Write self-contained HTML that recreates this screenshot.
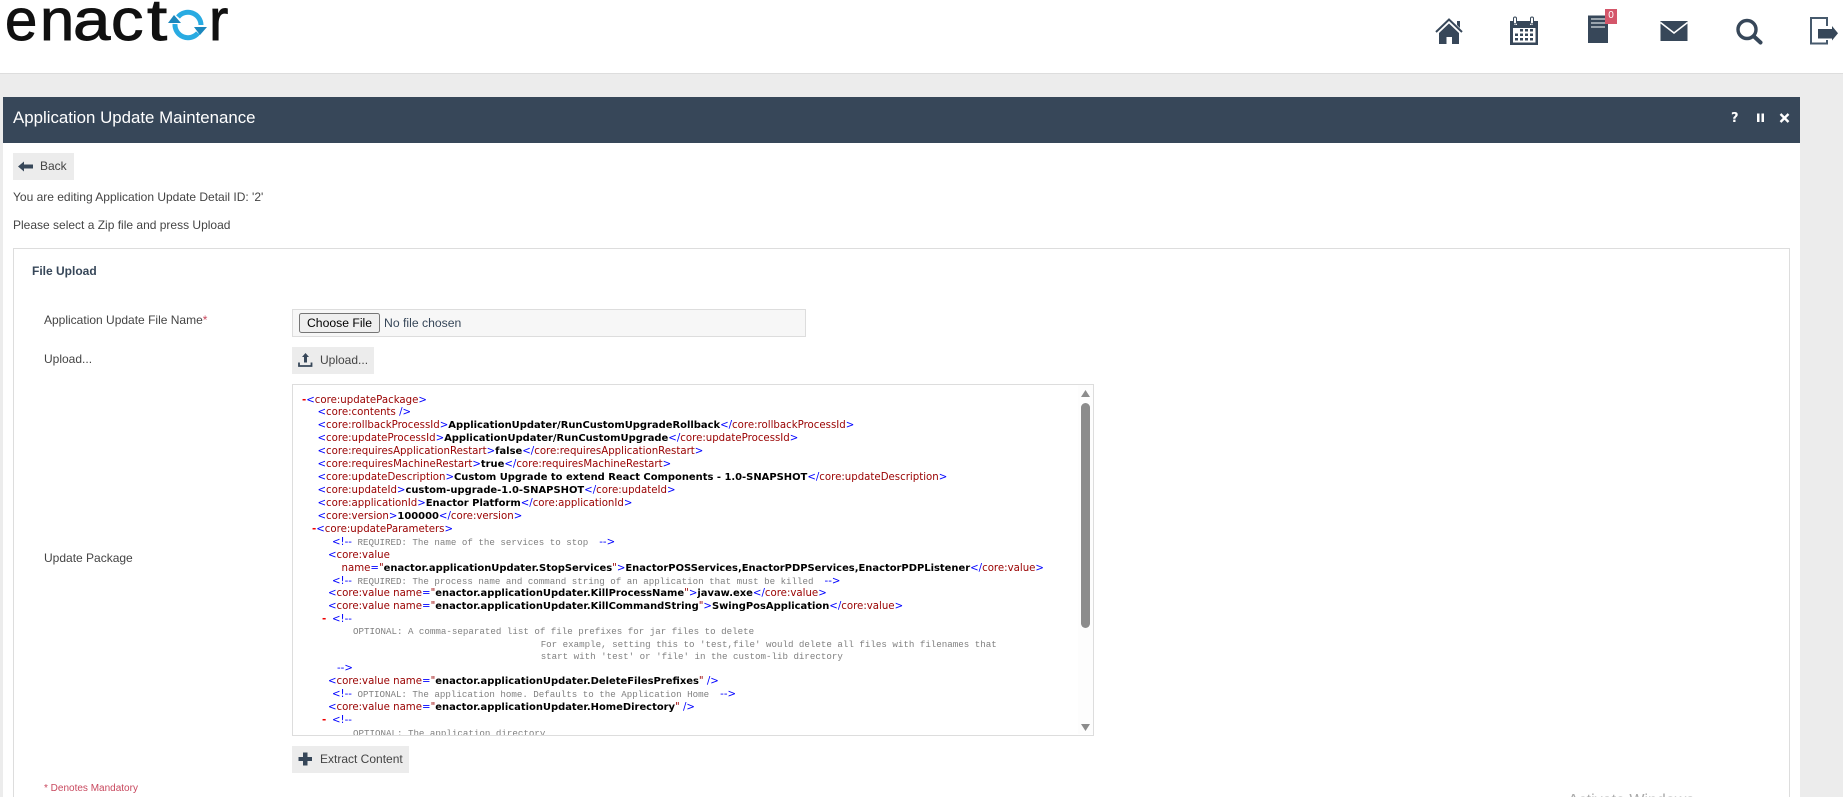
<!DOCTYPE html>
<html lang="en"><head><meta charset="utf-8"><title>Application Update Maintenance</title>
<style>
html,body{margin:0;padding:0;width:1843px;height:797px;overflow:hidden;background:#ececec;font-family:"Liberation Sans",Arial,sans-serif;}
body{position:relative}
.a{position:absolute}
.t{position:absolute;white-space:nowrap;font-size:12px;color:#444;line-height:14px}
.btn{position:absolute;background:#ececec;height:27px}
.x{position:absolute;white-space:pre;font-family:"DejaVu Sans",sans-serif;font-size:10.2px;line-height:13px;height:13px;color:#900}
.x i{font-style:normal;color:#00f}
.x b{color:#000;font-weight:bold;font-size:9.95px}
.x u{text-decoration:none;color:#e00;font-weight:bold}
.x s{text-decoration:none;font-family:"Liberation Mono",monospace;font-size:9.17px;color:#808080}
</style></head><body>
<div class="a" style="left:0;top:0;width:1843px;height:73px;background:#fff;border-bottom:1px solid #ddd"></div>

<svg class="a" style="left:0;top:0" width="240" height="60" viewBox="0 0 240 60">
<g font-family="Liberation Sans" font-size="58" fill="#111" stroke="#111" stroke-width=".9">
<text x="5" y="40">e</text>
<text transform="translate(40 40) scale(1.06 1)">n</text>
<text transform="translate(73 40) scale(1.16 1)">a</text>
<text transform="translate(111 40) scale(1.12 1)">c</text>
<text transform="translate(147 40) scale(1.25 1)">t</text>
<text x="209" y="40">r</text>
</g>
<path d="M178 17 A13 13 0 0 1 201 25" fill="none" stroke="#29abe2" stroke-width="5"/>
<path d="M175 24 A13 13 0 0 0 198 33" fill="none" stroke="#29abe2" stroke-width="5"/>
<path d="M168 23 L174 15 L181 23 Z" fill="#1b87bd"/>
<path d="M194 27 L207 27 L200 35 Z" fill="#1b87bd"/>
</svg>

<svg class="a" style="left:1430px;top:10px" width="410" height="42" viewBox="1430 10 410 42" fill="#374759">
<path d="M1436 32 L1449 19.5 L1462 32" fill="none" stroke="#374759" stroke-width="2"/>
<path d="M1457 21 h3 v7 l-3 -3z"/>
<path d="M1439 33 L1449 23.5 L1459 33 V44 H1452 V37 H1446.500 V44 H1439 Z"/>
<path fill-rule="evenodd" d="M1510 21 H1514 V25 H1517 V21 H1530 V25 H1533 V21 H1538 V45 H1510 Z M1513 28 V42.5 H1535.5 V28 Z"/>
<rect x="1513.5" y="17" width="3" height="7" rx="1.5" fill="none" stroke="#374759"/>
<rect x="1530.5" y="17" width="3" height="7" rx="1.5" fill="none" stroke="#374759"/>
<path d="M1520 29h3v2.5h-3zM1525 29h3v2.5h-3zM1530 29h3v2.5h-3zM1515 33.5h3v2.5h-3zM1520 33.5h3v2.5h-3zM1525 33.5h3v2.5h-3zM1530 33.5h3v2.5h-3zM1515 38h3v2.5h-3zM1520 38h3v2.5h-3zM1525 38h3v2.5h-3zM1530 38h3v2.5h-3z"/>
<rect x="1588" y="15.5" width="20" height="27.5"/>
<path d="M1591 19h14M1591 23h14M1591 27h14" stroke="#d5dbe0" stroke-width="1.2"/>
<rect x="1660.5" y="21" width="27" height="20"/>
<path d="M1660.5 22.5 L1674 33 L1687.5 22.5" fill="none" stroke="#fff" stroke-width="1.6"/>
<circle cx="1747" cy="29.5" r="9" fill="none" stroke="#374759" stroke-width="3.4"/>
<path d="M1754 36.5 L1760.500 42.500" stroke="#374759" stroke-width="4" stroke-linecap="round"/>
<path d="M1827 26 V18 H1811 V43.500 H1827 V40" fill="none" stroke="#475a6d" stroke-width="2"/>
<path d="M1818 29 H1832 V26 L1838 33.300 L1832 40.500 V38.500 H1818 Z"/>
</svg>
<div class="a" style="left:1605px;top:9px;width:12px;height:15px;background:#d4566a;color:#fff;font-size:10px;line-height:14px;text-align:center">0</div>

<div class="a" style="left:3px;top:97px;width:1797px;height:700px;background:#fff"></div>
<div class="a" style="left:3px;top:97px;width:1797px;height:46px;background:#374759"></div>
<div class="t" style="left:13px;top:108px;font-size:16.85px;line-height:20px;color:#fff">Application Update Maintenance</div>
<div class="t" style="left:1731px;top:110px;font-size:13px;line-height:18px;color:#fff;font-weight:bold;font-family:'DejaVu Sans',sans-serif">?</div>
<svg class="a" style="left:1750px;top:110px" width="50" height="16" fill="#fff"><rect x="7" y="3.5" width="2.5" height="8.5"/><rect x="11.5" y="3.5" width="2.5" height="8.5"/><path d="M30.5 4 L38.5 12 M38.5 4 L30.5 12" stroke="#fff" stroke-width="2.4"/></svg>

<div class="btn" style="left:13px;top:153px;width:61px"></div>
<svg class="a" style="left:18px;top:160px" width="16" height="13" fill="#374759"><path d="M0 6.5 L6 1.5 V4.5 H15 V8.5 H6 V11.5 Z"/></svg>
<div class="t" style="left:40px;top:159px">Back</div>
<div class="t" style="left:13px;top:190px">You are editing Application Update Detail ID: '2'</div>
<div class="t" style="left:13px;top:218px">Please select a Zip file and press Upload</div>

<div class="a" style="left:13px;top:248px;width:1775px;height:560px;border:1px solid #ddd"></div>
<div class="t" style="left:32px;top:264px;font-weight:bold;color:#374759">File Upload</div>
<div class="t" style="left:44px;top:313px">Application Update File Name<span style="color:#c8485e">*</span></div>
<div class="t" style="left:44px;top:352px">Upload...</div>
<div class="t" style="left:44px;top:551px">Update Package</div>

<div class="a" style="left:292px;top:309px;width:512px;height:26px;background:#f7f7f7;border:1px solid #ddd"></div>
<input class="a" type="file" style="left:299px;top:313px;width:420px;font-size:12.2px;color:#374759;font-family:'Liberation Sans',Arial,sans-serif">

<div class="btn" style="left:292px;top:347px;width:82px"></div>
<svg class="a" style="left:298px;top:352px" width="15" height="16" fill="#374759"><path d="M7.5 1 L11 5 H9 V10.500 H6 V5 H4 Z"/><path d="M1 10.500 V14 H13.500 V10.500" fill="none" stroke="#374759" stroke-width="1.8"/></svg>
<div class="t" style="left:320px;top:353px">Upload...</div>

<div class="a" style="left:292px;top:384px;width:800px;height:350px;border:1px solid #ddd;background:#fff;overflow:hidden"></div>
<div class="a" style="left:293px;top:385px;width:785px;height:350px;overflow:hidden">
<div class="a" style="left:-293px;top:-385px;width:1100px;height:760px">
<div class="x" style="left:302px;top:394px"><u>-</u><i>&lt;</i>core:updatePackage<i>&gt;</i></div>
<div class="x" style="left:317.5px;top:406px"><i>&lt;</i>core:contents <i>/&gt;</i></div>
<div class="x" style="left:317.5px;top:419px"><i>&lt;</i>core:rollbackProcessId<i>&gt;</i><b>ApplicationUpdater/RunCustomUpgradeRollback</b><i>&lt;/</i>core:rollbackProcessId<i>&gt;</i></div>
<div class="x" style="left:317.5px;top:432px"><i>&lt;</i>core:updateProcessId<i>&gt;</i><b>ApplicationUpdater/RunCustomUpgrade</b><i>&lt;/</i>core:updateProcessId<i>&gt;</i></div>
<div class="x" style="left:317.5px;top:445px"><i>&lt;</i>core:requiresApplicationRestart<i>&gt;</i><b>false</b><i>&lt;/</i>core:requiresApplicationRestart<i>&gt;</i></div>
<div class="x" style="left:317.5px;top:458px"><i>&lt;</i>core:requiresMachineRestart<i>&gt;</i><b>true</b><i>&lt;/</i>core:requiresMachineRestart<i>&gt;</i></div>
<div class="x" style="left:317.5px;top:471px"><i>&lt;</i>core:updateDescription<i>&gt;</i><b>Custom Upgrade to extend React Components - 1.0-SNAPSHOT</b><i>&lt;/</i>core:updateDescription<i>&gt;</i></div>
<div class="x" style="left:317.5px;top:484px"><i>&lt;</i>core:updateId<i>&gt;</i><b>custom-upgrade-1.0-SNAPSHOT</b><i>&lt;/</i>core:updateId<i>&gt;</i></div>
<div class="x" style="left:317.5px;top:497px"><i>&lt;</i>core:applicationId<i>&gt;</i><b>Enactor Platform</b><i>&lt;/</i>core:applicationId<i>&gt;</i></div>
<div class="x" style="left:317.5px;top:510px"><i>&lt;</i>core:version<i>&gt;</i><b>100000</b><i>&lt;/</i>core:version<i>&gt;</i></div>
<div class="x" style="left:312px;top:523px"><u>-</u><i>&lt;</i>core:updateParameters<i>&gt;</i></div>
<div class="x" style="left:332px;top:536px"><i>&lt;!--</i><s> REQUIRED: The name of the services to stop  </s><i>--&gt;</i></div>
<div class="x" style="left:328px;top:549px"><i>&lt;</i>core:value</div>
<div class="x" style="left:341.5px;top:562px">name<i>=</i>"<b>enactor.applicationUpdater.StopServices</b>"<i>&gt;</i><b>EnactorPOSServices,EnactorPDPServices,EnactorPDPListener</b><i>&lt;/</i>core:value<i>&gt;</i></div>
<div class="x" style="left:332px;top:575px"><i>&lt;!--</i><s> REQUIRED: The process name and command string of an application that must be killed  </s><i>--&gt;</i></div>
<div class="x" style="left:328px;top:587px"><i>&lt;</i>core:value name<i>=</i>"<b>enactor.applicationUpdater.KillProcessName</b>"<i>&gt;</i><b>javaw.exe</b><i>&lt;/</i>core:value<i>&gt;</i></div>
<div class="x" style="left:328px;top:600px"><i>&lt;</i>core:value name<i>=</i>"<b>enactor.applicationUpdater.KillCommandString</b>"<i>&gt;</i><b>SwingPosApplication</b><i>&lt;/</i>core:value<i>&gt;</i></div>
<div class="x" style="left:322px;top:613px"><u>-</u></div><div class="x" style="left:332px;top:613px"><i>&lt;!--</i></div>
<div class="x" style="left:353px;top:625px"><s>OPTIONAL: A comma-separated list of file prefixes for jar files to delete</s></div>
<div class="x" style="left:540.7px;top:638px"><s>For example, setting this to 'test,file' would delete all files with filenames that</s></div>
<div class="x" style="left:540.7px;top:650px"><s>start with 'test' or 'file' in the custom-lib directory</s></div>
<div class="x" style="left:337px;top:662px"><i>--&gt;</i></div>
<div class="x" style="left:328px;top:675px"><i>&lt;</i>core:value name<i>=</i>"<b>enactor.applicationUpdater.DeleteFilesPrefixes</b>" <i>/&gt;</i></div>
<div class="x" style="left:332px;top:688px"><i>&lt;!--</i><s> OPTIONAL: The application home. Defaults to the Application Home  </s><i>--&gt;</i></div>
<div class="x" style="left:328px;top:701px"><i>&lt;</i>core:value name<i>=</i>"<b>enactor.applicationUpdater.HomeDirectory</b>" <i>/&gt;</i></div>
<div class="x" style="left:322px;top:714px"><u>-</u></div><div class="x" style="left:332px;top:714px"><i>&lt;!--</i></div>
<div class="x" style="left:353px;top:727px"><s>OPTIONAL: The application directory</s></div>
</div></div>

<div class="a" style="left:1078px;top:385px;width:15px;height:349px;background:#fdfdfd"></div>
<div class="a" style="left:1081px;top:403px;width:9px;height:225px;background:#8c8c8c;border-radius:4.5px"></div>
<svg class="a" style="left:1078px;top:385px" width="15" height="350" fill="#8c8c8c"><path d="M3 12 L7.5 5 L12 12 Z"/><path d="M3 339 L7.5 346 L12 339 Z"/></svg>

<div class="btn" style="left:292px;top:746px;width:117px"></div>
<svg class="a" style="left:298px;top:752px" width="14" height="14" fill="#374759"><path d="M5 0.5H9.500V5H14V9H9.500V13.500H5V9H0.500V5H5Z"/></svg>
<div class="t" style="left:320px;top:752px">Extract Content</div>

<div class="t" style="left:44px;top:782px;font-size:10px;color:#c8485e">* Denotes Mandatory</div>
<div class="t" style="left:1568px;top:791px;font-size:16px;line-height:20px;color:#aaa">Activate Windows</div>
</body></html>
